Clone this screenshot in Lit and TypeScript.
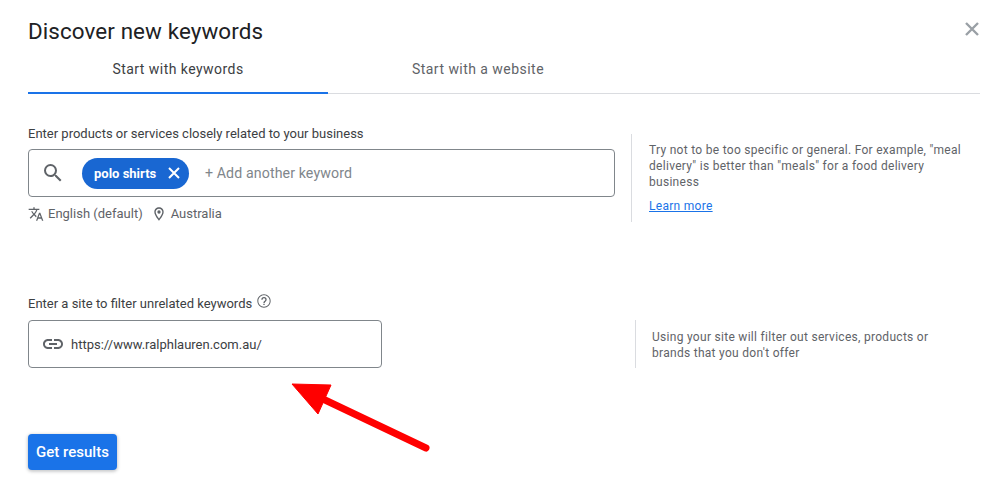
import { LitElement, html, css } from "lit";
import { customElement } from "lit/decorators.js";

@customElement("app-root")
export class AppRoot extends LitElement {
  static styles = css`
    :host { display: block; position: relative; width: 1008px; height: 478px; overflow: hidden; background: #fff; font-family: Roboto, sans-serif; color: #3c4043; }
    .page { padding: 16px 28px 0; display: flex; flex-direction: column; }
    .head { display: flex; justify-content: space-between; align-items: flex-start; height: 29px; }
    h1 { margin: 0; padding-top: 1px; font: 400 22.4px/29px Roboto, sans-serif; color: #202124; letter-spacing: 0.1px; }
    .close { display: block; margin-top: 5px; }
    .tabs { display: flex; height: 48px; border-bottom: 1px solid #dadce0; }
    .tab { width: 300px; box-sizing: border-box; text-align: center; font-size: 14px; font-weight: 400; line-height: 20px; padding-top: 14px; letter-spacing: 0.46px; color: #5f6368; }
    .tab.on { color: #3c4043; border-bottom: 2px solid #1a73e8; height: 49px; }
    .row { display: flex; }
    .row.one { margin-top: 31px; }
    .row.two { margin-top: 72px; }
    .main { flex: none; }
    .label { font-size: 13px; line-height: 18px; color: #3c4043; display: flex; align-items: flex-start; gap: 4px; }
    .label svg { margin-top: -2px; }
    .box { box-sizing: border-box; height: 48px; border: 1px solid #80868b; border-radius: 4px; display: flex; align-items: center; }
    .box.kw { width: 587px; margin-top: 6px; padding-left: 12px; }
    .box.site { width: 354px; margin-top: 7px; padding-left: 12px; gap: 6px; font-size: 13px; color: #3c4043; }
    .chip { display: flex; align-items: center; justify-content: space-between; width: 107px; height: 31px; box-sizing: border-box; margin-left: 17px; padding: 0 8px 0 12px; border-radius: 16px; background: #1967d2; color: #fff; font-size: 13px; font-weight: 700; }
    .add { margin-left: 16px; font-size: 14.2px; color: #80868b; letter-spacing: 0.1px; }
    .meta { display: flex; align-items: center; margin-top: 8px; font-size: 13px; line-height: 18px; color: #5f6368; height: 18px; }
    .meta svg { display: block; }
    .meta .en { margin-left: 4px; }
    .meta .pin { margin-left: 8px; }
    .meta .au { margin-left: 4px; }
    .note { box-sizing: border-box; border-left: 1px solid #dadce0; font-size: 12px; line-height: 16px; color: #5f6368; letter-spacing: 0.29px; }
    .note.a { width: 340px; height: 88px; margin: 9px 0 0 16px; padding: 8px 0 0 17px; }
    .note.a p { width: 318px; }
    .note.b { width: 340px; height: 48px; margin: 25px 0 0 253px; padding: 9px 0 0 16px; }
    .note.b p { width: 290px; }
    .note p { margin: 0; }
    a { display: block; margin-top: 8px; color: #1a73e8; text-decoration: underline; }
    button { align-self: flex-start; margin-top: 66px; width: 89px; height: 36px; padding: 0; border: 0; border-radius: 4px; background: #1a73e8; color: #fff; font: 500 15px Roboto, sans-serif; box-shadow: 0 1px 3px 1px rgba(60,64,67,.25); }
    .arrow { position: absolute; left: 285px; top: 375px; display: block; }
  `;

  render() {
    return html`
      <div class="page">
        <div class="head">
          <h1>Discover new keywords</h1>
          <svg class="close" width="16" height="16" viewBox="0 0 16 16"><path d="M2 2 14 14M14 2 2 14" stroke="#9aa0a6" stroke-width="2.4" fill="none"/></svg>
        </div>
        <div class="tabs">
          <div class="tab on">Start with keywords</div>
          <div class="tab">Start with a website</div>
        </div>
        <div class="row one">
          <div class="main">
            <div class="label">Enter products or services closely related to your business</div>
            <div class="box kw">
              <svg width="24" height="24" viewBox="0 0 24 24"><path fill="#5f6368" d="M15.5 14h-.79l-.28-.27A6.47 6.47 0 0 0 16 9.5 6.5 6.5 0 1 0 9.5 16c1.61 0 3.09-.59 4.23-1.57l.27.28v.79l5 4.99L20.49 19l-4.99-5zm-6 0C7.01 14 5 11.99 5 9.5S7.01 5 9.5 5 14 7.01 14 9.5 11.99 14 9.5 14z"/></svg>
              <div class="chip">polo shirts
                <svg width="14" height="14" viewBox="0 0 14 14"><path d="M2 2 12 12M12 2 2 12" stroke="#fff" stroke-width="2" fill="none"/></svg>
              </div>
              <span class="add">+ Add another keyword</span>
            </div>
            <div class="meta">
              <svg width="16" height="16" viewBox="0 0 24 24"><path fill="#5f6368" d="m12.87 15.07-2.54-2.51.03-.03A17.52 17.52 0 0 0 14.07 6H17V4h-7V2H8v2H1v1.99h11.17C11.5 7.92 10.44 9.75 9 11.35 8.07 10.32 7.3 9.19 6.69 8h-2c.73 1.63 1.73 3.17 2.98 4.56l-5.09 5.02L4 19l5-5 3.11 3.11.76-2.04zM18.5 10h-2L12 22h2l1.12-3h4.75L21 22h2l-4.5-12zm-2.62 7 1.62-4.33L19.12 17h-3.24z"/></svg>
              <span class="en">English (default)</span>
              <svg class="pin" width="16" height="16" viewBox="0 0 24 24"><path fill="#5f6368" d="M12 2C8.13 2 5 5.13 5 9c0 5.25 7 13 7 13s7-7.75 7-13c0-3.87-3.13-7-7-7zM7 9c0-2.76 2.24-5 5-5s5 2.24 5 5c0 2.88-2.88 7.19-5 9.88C9.92 16.21 7 11.85 7 9z"/><circle cx="12" cy="9" r="2.5" fill="#5f6368"/></svg>
              <span class="au">Australia</span>
            </div>
          </div>
          <div class="note a">
            <p>Try not to be too specific or general. For example, "meal delivery" is better than "meals" for a food delivery business</p>
            <a>Learn more</a>
          </div>
        </div>
        <div class="row two">
          <div class="main">
            <div class="label">Enter a site to filter unrelated keywords
              <svg width="16" height="16" viewBox="0 0 24 24"><path fill="#5f6368" d="M11 18h2v-2h-2v2zm1-16C6.48 2 2 6.48 2 12s4.48 10 10 10 10-4.48 10-10S17.52 2 12 2zm0 18.5c-4.7 0-8.5-3.8-8.5-8.5S7.3 3.5 12 3.5s8.5 3.8 8.5 8.5-3.8 8.5-8.5 8.5zM12 6a4 4 0 0 0-4 4h2c0-1.1.9-2 2-2s2 .9 2 2c0 2-3 1.75-3 5h2c0-2.25 3-2.5 3-5a4 4 0 0 0-4-4z"/></svg>
            </div>
            <div class="box site">
              <svg width="24" height="24" viewBox="0 0 24 24"><path fill="#5f6368" d="M3.9 12c0-1.71 1.39-3.1 3.1-3.1h4V7H7c-2.76 0-5 2.24-5 5s2.24 5 5 5h4v-1.9H7c-1.71 0-3.1-1.39-3.1-3.1zM8 13h8v-2H8v2zm9-6h-4v1.9h4c1.71 0 3.1 1.39 3.1 3.1s-1.39 3.1-3.1 3.1h-4V17h4c2.76 0 5-2.24 5-5s-2.24-5-5-5z"/></svg>
              https://www.ralphlauren.com.au/
            </div>
          </div>
          <div class="note b"><p>Using your site will filter out services, products or brands that you don't offer</p></div>
        </div>
        <button>Get results</button>
      </div>
      <svg class="arrow" width="150" height="80" viewBox="285 375 150 80">
        <path d="M426 448 325 400" stroke="#f00" stroke-width="7" stroke-linecap="round" fill="none"/>
        <path d="M292 384 331 385 318 414Z" fill="#f00" stroke="#f00" stroke-width="1"/>
      </svg>
    `;
  }
}
